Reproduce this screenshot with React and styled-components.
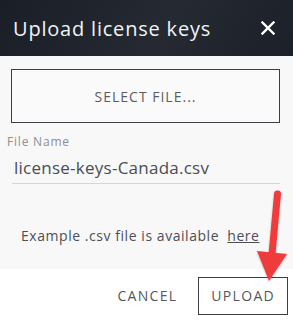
import React from "react";
import styled, { createGlobalStyle } from "styled-components";

const Global = createGlobalStyle`
  html, body { margin: 0; padding: 0; background: #ffffff; }
  body { font-family: "Open Sans", "Liberation Sans", sans-serif; }
`;

const Dialog = styled.div`
  position: relative;
  width: 293px;
  height: 322px;
  display: flex;
  flex-direction: column;
  background: #ffffff;
  overflow: hidden;
`;

const Header = styled.header`
  height: 56px;
  flex: none;
  display: flex;
  align-items: center;
  justify-content: space-between;
  padding: 0 16px 0 13px;
  background: linear-gradient(120deg, #1a1e27 0%, #242932 55%, #1c2029 100%);
`;

const Title = styled.h1`
  margin: 0;
  font-size: 20px;
  font-weight: 400;
  color: #f2f3f5;
  letter-spacing: 0.8px;
`;

const Close = styled.button`
  width: 18px;
  height: 18px;
  padding: 0;
  border: 0;
  background: none;
  display: flex;
  align-items: center;
  justify-content: center;
  cursor: pointer;
`;

const Body = styled.div`
  height: 213px;
  flex: none;
  background: #f8f8f9;
  padding: 13px 13px 0 7px;
  box-sizing: border-box;
  display: flex;
  flex-direction: column;
`;

const SelectButton = styled.button`
  margin-left: 4px;
  height: 54px;
  border: 1.5px solid #3b3e47;
  background: #fafafb;
  font-family: inherit;
  font-size: 14px;
  color: #5a5c62;
  letter-spacing: 1px;
  cursor: pointer;
`;

const Label = styled.label`
  margin-top: 10px;
  font-size: 12px;
  letter-spacing: 0.8px;
  color: #8d8f94;
`;

const Input = styled.input`
  margin: 6px 0 0 5px;
  padding: 0 0 4px 2px;
  border: 0;
  border-bottom: 1px solid #d5d6d9;
  background: transparent;
  font-family: inherit;
  font-size: 17px;
  letter-spacing: 0.25px;
  color: #4a4c52;
  outline: none;
`;

const Example = styled.p`
  margin: 42px 0 0 14px;
  font-size: 14px;
  letter-spacing: 0.55px;
  color: #4d4f55;
`;

const Link = styled.a`
  margin-left: 4px;
  color: #4d4f55;
  text-decoration: underline;
`;

const Footer = styled.footer`
  flex: 1;
  display: flex;
  align-items: center;
  justify-content: flex-end;
  gap: 21px;
  padding: 0 5px 0 0;
`;

const FooterButton = styled.button`
  height: ${(p) => (p.$outlined ? "38px" : "auto")};
  padding: 0 ${(p) => (p.$outlined ? "12px" : "0")};
  border: ${(p) => (p.$outlined ? "1.5px solid #3b3e47" : "0")};
  background: transparent;
  font-family: inherit;
  font-size: 14px;
  color: #55575d;
  letter-spacing: 1.3px;
  cursor: pointer;
`;

const Arrow = styled.svg`
  position: absolute;
  left: 250px;
  top: 188px;
  pointer-events: none;
`;

export default function App() {
  return (
    <>
      <Global />
      <Dialog>
        <Header>
          <Title>Upload license keys</Title>
          <Close aria-label="Close">
            <svg width="14" height="14" viewBox="0 0 14 14">
              <path d="M1.5 1.5 L12.5 12.5 M12.5 1.5 L1.5 12.5" stroke="#ffffff" strokeWidth="2.4" strokeLinecap="square" />
            </svg>
          </Close>
        </Header>
        <Body>
          <SelectButton>SELECT FILE...</SelectButton>
          <Label>File Name</Label>
          <Input readOnly value="license-keys-Canada.csv" />
          <Example>
            Example .csv file is available <Link href="#">here</Link>
          </Example>
        </Body>
        <Footer>
          <FooterButton>CANCEL</FooterButton>
          <FooterButton $outlined>UPLOAD</FooterButton>
        </Footer>
        <Arrow width="43" height="100" viewBox="0 0 43 100">
          <defs>
            <filter id="sh" x="-30%" y="-10%" width="160%" height="130%">
              <feDropShadow dx="0" dy="1" stdDeviation="1.2" floodColor="#000" floodOpacity="0.25" />
            </filter>
          </defs>
          <g filter="url(#sh)">
            <path d="M27.5 6 L22 66" stroke="#f03b3e" strokeWidth="7" strokeLinecap="round" />
            <path d="M7 63 L37 66 L19 93 Z" fill="#f03b3e" />
          </g>
        </Arrow>
      </Dialog>
    </>
  );
}
